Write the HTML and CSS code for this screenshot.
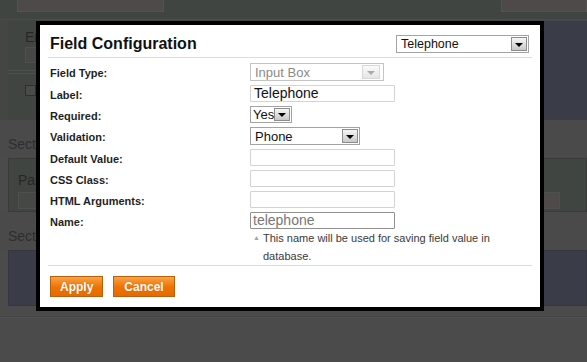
FILE: index.html
```html
<!DOCTYPE html>
<html lang="en">
<head>
<meta charset="UTF-8" />
<title>Field Configuration</title>
<link rel="stylesheet" href="styles.css">
</head>
<body>
<!-- Dimmed page behind the dialog (only its left/right edges show) -->
<div class="page">
  <div class="top-bar">
    <div class="top-box"></div>
    <div class="top-box top-box-right"></div>
  </div>

  <div class="fieldset-first">
    <div class="fs-main">
      <div class="bg-label">Em</div>
      <div class="bg-input"></div>
      <div class="bg-rule"></div>
      <div class="bg-check"><span class="bg-box"></span>S</div>
    </div>
    <div class="fs-side"></div>
  </div>

  <div class="section-title">Secti</div>
  <div class="fieldset-green">
    <div class="bg-label">Pas</div>
    <div class="bg-inputs">
      <div class="bg-input"></div>
      <div class="bg-input bg-input-small"></div>
    </div>
  </div>

  <div class="section-title">Secti</div>
  <div class="fieldset-blue"></div>
  <div class="page-foot"></div>
</div>

<!-- Dialog -->
<div class="dialog">
  <div class="dialog-head">
    <h2>Field Configuration</h2>
    <div class="select select-head"><span>Telephone</span><i class="arrow"></i></div>
  </div>
  <div class="rule"></div>

  <div class="form">
    <div class="fields">
      <div class="row">
        <label>Field Type:</label>
        <div class="select select-type disabled"><span>Input Box</span><i class="arrow"></i></div>
      </div>
      <div class="row">
        <label>Label:</label>
        <div class="input">Telephone</div>
      </div>
      <div class="row">
        <label>Required:</label>
        <div class="select select-yes"><span>Yes</span><i class="arrow"></i></div>
      </div>
      <div class="row">
        <label>Validation:</label>
        <div class="select select-valid"><span>Phone</span><i class="arrow"></i></div>
      </div>
      <div class="row">
        <label>Default Value:</label>
        <div class="input"></div>
      </div>
      <div class="row">
        <label>CSS Class:</label>
        <div class="input"></div>
      </div>
      <div class="row">
        <label>HTML Arguments:</label>
        <div class="input"></div>
      </div>
      <div class="row">
        <label>Name:</label>
        <div class="input input-name">telephone</div>
      </div>
    </div>
    <div class="note">
      <span class="note-icon">&#9650;</span>
      <p>This name will be used for saving field value in database.</p>
    </div>
  </div>

  <div class="rule"></div>
  <div class="buttons">
    <button class="btn-apply">Apply</button>
    <button class="btn-cancel">Cancel</button>
  </div>
</div>
</body>
</html>
```

FILE: styles.css
```css
body {
  margin: 0;
  background: #4b4b4b;
  font-family: "Liberation Sans", Arial, sans-serif;
  color: #222;
}
/* Background page (already dimmed) */
.page {
  width: 587px;
  height: 362px;
  overflow: hidden;
  color: #262826;
  font-size: 14px;
}
.top-bar {
  height: 19px;
  display: flex;
  justify-content: space-between;
  padding-left: 17px;
  background: #414541;
  border-bottom: 1px solid #494d49;
}
.top-box {
  width: 145px;
  height: 11px;
  background: #4f4a4a;
  border: 1px solid #575252;
  border-top: none;
}
.top-box-right {
  width: 84px;
}
.fieldset-first {
  display: flex;
  height: 100px;
}
.fs-main {
  flex: 1;
  background: #414541;
  padding: 9px 0 0 17px;
  border-left: 8px solid #434643;
}
.bg-label {
  height: 16px;
}
.bg-input {
  width: 200px;
  height: 14px;
  margin-top: 2px;
  background: #454844;
  border: 1px solid #4d504d;
}
.bg-rule {
  height: 2px;
  margin: 7px 0 8px -17px;
  border-top: 1px solid #4c504c;
  border-bottom: 1px solid #4c504c;
}
.bg-check {
  display: flex;
  align-items: center;
  gap: 1px;
}
.bg-box {
  width: 9px;
  height: 9px;
  border: 1px solid #2d302d;
  background: #484b48;
}
.fs-side {
  width: 87px;
  background: #3a3d47;
  border-left: 1px solid #444;
  box-shadow: inset 0 50px 0 -49px #434650;
}
.section-title {
  height: 38px;
  box-sizing: border-box;
  padding: 16px 0 0 8px;
  background: #4a4a4a;
  color: #2e2e2e;
}
.fieldset-green {
  height: 54px;
  box-sizing: border-box;
  margin-left: 8px;
  padding: 13px 0 0 9px;
  background: #414541;
  border: 1px solid #393b39;
}
.fieldset-green .bg-input {
  height: 15px;
  margin-top: 4px;
}
.bg-inputs {
  display: flex;
  justify-content: space-between;
  padding-right: 26px;
}
.fieldset-green .bg-input-small {
  width: 15px;
  background: #4f4a4a;
}
.fieldset-blue {
  height: 56px;
  box-sizing: border-box;
  margin-left: 8px;
  background: #3a3d47;
  border: 1px solid #353740;
}
.page-foot {
  margin-top: 10px;
  border-top: 1px solid #444;
  height: 1px;
  background: #505050;
}

/* Dialog */
.dialog {
  position: absolute;
  left: 36px;
  top: 21px;
  width: 500px;
  height: 282px;
  background: #fff;
  border: 4px solid #000;
}
.dialog-head {
  height: 32px;
  box-sizing: border-box;
  padding: 10px 11px 0 10px;
  display: flex;
  justify-content: space-between;
  align-items: flex-start;
}
.dialog-head h2 {
  margin: 0;
  font-size: 16px;
  line-height: 18px;
  color: #111;
}
.rule {
  height: 1px;
  margin: 0 8px;
  background: #dcdcdc;
}
/* Select boxes */
.select {
  height: 18px;
  box-sizing: border-box;
  border: 1px solid #a3a3a3;
  display: flex;
  align-items: center;
  justify-content: space-between;
  padding: 0 1px 0 4px;
  font-size: 13px;
  color: #111;
  background: #fff;
}
.select-head {
  width: 133px;
  font-size: 12.5px;
}
.select-type {
  width: 134px;
}
.select-yes {
  width: 42px;
  height: 17px;
  padding-left: 2px;
}
.select-valid {
  width: 110px;
}
.arrow {
  width: 16px;
  height: 14px;
  box-sizing: border-box;
  border: 1px solid #8d8d8d;
  background: linear-gradient(#f6f6f6, #c8c8c8);
  display: flex;
  align-items: center;
  justify-content: center;
}
.arrow::after {
  content: "";
  border-left: 4px solid transparent;
  border-right: 4px solid transparent;
  border-top: 4px solid #000;
  margin-top: 1px;
}
.select-yes .arrow {
  height: 13px;
}
.select.disabled {
  color: #8a8a8a;
  border-color: #c4c4c4;
}
.select.disabled .arrow {
  width: 18px;
  border-color: #d8d8d8;
  background: linear-gradient(#fafafa, #e6e6e6);
  margin-right: 2px;
}
.select.disabled .arrow::after {
  border-top-color: #aaa;
}
/* Form rows */
.form {
  padding: 5px 0 0 10px;
}
.fields {
  display: flex;
  flex-direction: column;
  gap: 4px;
}
.row {
  display: flex;
  align-items: flex-start;
}
.row label {
  width: 200px;
  padding-top: 4px;
  font-size: 11px;
  line-height: 13px;
  font-weight: bold;
  color: #1f1f1f;
}
.input {
  width: 145px;
  height: 17px;
  box-sizing: border-box;
  border: 1px solid #d3d3d3;
  border-radius: 1px;
  padding: 0 3px;
  font-size: 14px;
  line-height: 15px;
  color: #111;
}
.input-name {
  border-color: #8f8f8f;
  color: #777;
  padding-left: 2px;
}
.note {
  display: flex;
  padding-left: 200px;
  font-size: 11px;
  line-height: 18px;
  color: #3a3a3a;
}
.note-icon {
  width: 13px;
  text-align: center;
  font-size: 7px;
  color: #a5a5a5;
}
.note p {
  margin: 0;
  width: 250px;
}
/* Buttons */
.buttons {
  display: flex;
  gap: 10px;
  padding: 10px 10px 0;
}
button {
  height: 21px;
  padding: 0 9px;
  border: 1px solid #b9600f;
  background: linear-gradient(#fba243, #ee7202 55%, #e66a00);
  color: #fff;
  font-family: "Liberation Sans", Arial, sans-serif;
  font-size: 12px;
  font-weight: bold;
  text-shadow: 0 0 1px #d06000;
  cursor: pointer;
}
.btn-cancel {
  padding: 0 10px;
}
```
